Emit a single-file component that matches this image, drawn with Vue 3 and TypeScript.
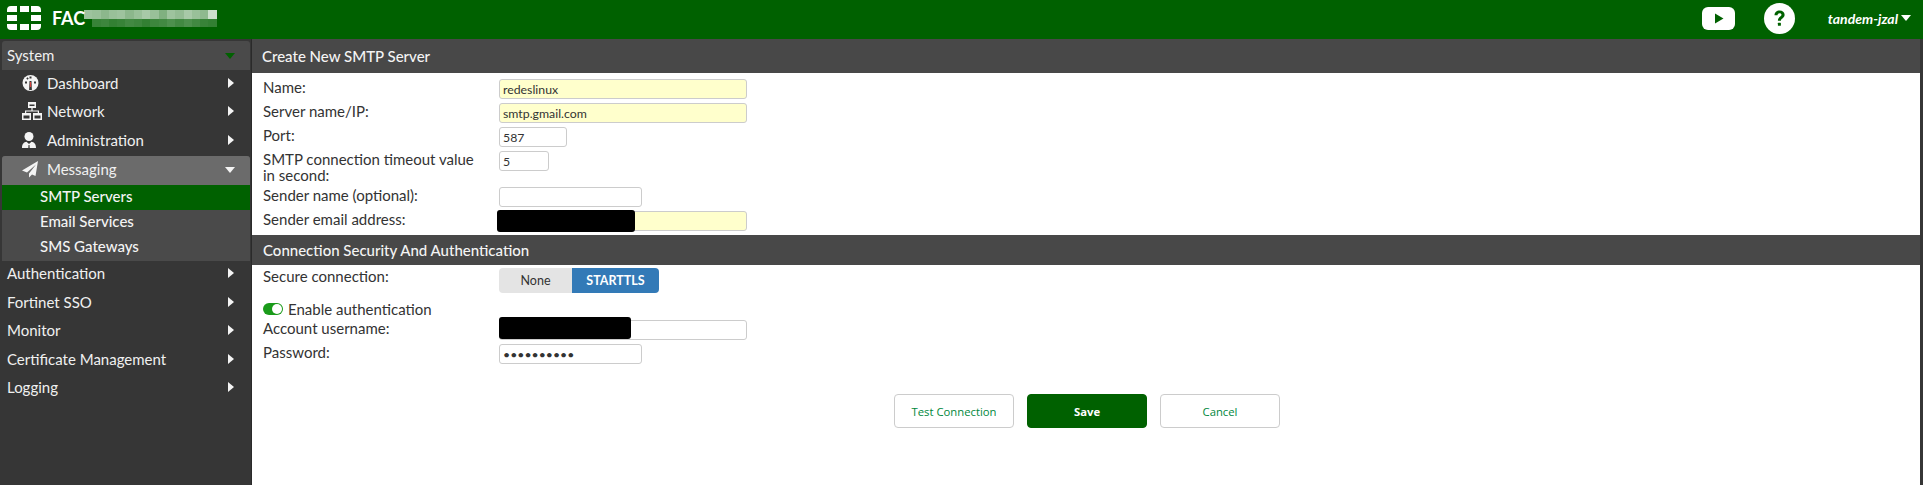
<script setup lang="ts">
const navTop = [
  { label: 'Dashboard', icon: 'gauge' },
  { label: 'Network', icon: 'net' },
  { label: 'Administration', icon: 'user' },
]
const subItems = ['SMTP Servers', 'Email Services', 'SMS Gateways']
const navBottom = ['Authentication', 'Fortinet SSO', 'Monitor', 'Certificate Management', 'Logging']

const mosaicTop = [0.62, 0.6, 0.55, 0.6, 0.62, 0.55, 0.6, 0.66, 0.6, 0.5, 0.62, 0.58, 0.66, 0.6, 0.56, 0.8]
const mosaicBottom = [0, 0.22, 0.24, 0.2, 0.22, 0.26, 0.24, 0.2, 0.24, 0.26, 0.3, 0.26, 0.3, 0.26, 0.22, 0.2]
</script>

<template>
  <div class="page">
    <header class="topbar">
      <div class="brand">
        <svg class="logo" width="34" height="24" viewBox="0 0 34 24" fill="#fff">
          <path d="M4 0H10v6H0V4A4 4 0 0 1 4 0zM13 0h9v6h-9zM24 0h6A4 4 0 0 1 34 4V6H24zM0 9h10v6H0zM24 9h10v6H24zM0 18h10v6H4A4 4 0 0 1 0 20zM13 18h9v6h-9zM24 18h10v2a4 4 0 0 1-4 4H24z" />
        </svg>
        <span class="brand-name">FAC</span>
        <div class="mosaic">
          <div class="mosaic-row">
            <i v-for="(a, n) in mosaicTop" :key="n" :style="{ opacity: a }"></i>
          </div>
          <div class="mosaic-row">
            <i v-for="(a, n) in mosaicBottom" :key="n" :style="{ opacity: a }"></i>
          </div>
        </div>
      </div>
      <div class="top-actions">
        <svg width="33" height="23" viewBox="0 0 33 23">
          <rect width="33" height="23" rx="6" fill="#fff" />
          <path d="M13 6.500v10l8.500-5z" fill="#006100" />
        </svg>
        <svg class="help" width="31" height="31" viewBox="0 0 31 31">
          <circle cx="15.500" cy="15.500" r="15.500" fill="#fff" />
          <path d="M10.500 12.300c0-3 2.200-4.800 5.100-4.800 2.900 0 5 1.800 5 4.300 0 3.600-3.700 3.500-3.700 6h-3c0-4 3.600-4 3.600-6 0-.9-.8-1.500-1.900-1.500-1.200 0-2 .8-2.100 2z" fill="#006100" />
          <rect x="13.900" y="19.700" width="3" height="3" rx=".5" fill="#006100" />
        </svg>
        <span class="user">tandem-jzal</span>
        <span class="user-caret"></span>
      </div>
    </header>

    <div class="body">
      <aside class="sidebar">
        <div class="group-head system">
          <span>System</span>
          <span class="caret-down green"></span>
        </div>

        <div v-for="item in navTop" :key="item.label" class="nav-item">
          <svg v-if="item.icon === 'gauge'" class="nav-icon" width="20" height="20" viewBox="1 0 20 20">
            <circle cx="9.500" cy="10" r="8" fill="#f4f4f4" />
            <path d="M8.500 3.500h2v2h-2zM4 8.500h2v2H4zM13 8.500h2v2h-2zM5.300 5.300l1.400-1 1 1.400-1.400 1z" fill="#363636" />
            <path d="M8.500 8h2l.4 9h-2.800z" fill="#363636" />
            <path d="M9 9h1l.2 5H8.800z" fill="#d43f3a" />
          </svg>
          <svg v-else-if="item.icon === 'net'" class="nav-icon" width="20" height="20" viewBox="0 0 20 20" fill="#f4f4f4">
            <path d="M6 1h8v6h-3.400v2.400H17V12h3v7h-9v-7h4.800v-1.400H4.200V12H9v7H0v-7h3V9.400h6.400V7H6zM7.500 3.500V5h5V3.500zM1.500 14.500V17.500h6v-3zM12.500 14.500V17.500h6v-3z" fill-rule="evenodd" />
          </svg>
          <svg v-else class="nav-icon" width="20" height="20" viewBox="2 0 20 20" fill="#f4f4f4">
            <circle cx="9" cy="6.500" r="4.500" />
            <path d="M2 18c0-4 2-6 4.500-6.200L9 14l2.500-2.200C14 12 16 14 16 18h-6.300l-.2-3h-1l-.2 3z" />
          </svg>
          <span class="nav-label">{{ item.label }}</span>
          <span class="caret-right"></span>
        </div>

        <div class="group">
          <div class="group-head messaging">
            <svg class="nav-icon" width="20" height="20" viewBox="1 0 20 20" fill="#f4f4f4">
              <path d="M17 2 1 11.500l5 2L15 5.500l-7 9v4l3-3 3.500 1.500z" />
            </svg>
            <span class="nav-label">Messaging</span>
            <span class="caret-down"></span>
          </div>
          <div
            v-for="(sub, n) in subItems"
            :key="sub"
            class="sub-item"
            :class="{ active: n === 0 }"
          >
            {{ sub }}
          </div>
        </div>

        <div v-for="label in navBottom" :key="label" class="nav-item plain">
          <span class="nav-label">{{ label }}</span>
          <span class="caret-right"></span>
        </div>
      </aside>

      <main class="content">
        <h2 class="section-title first">Create New SMTP Server</h2>
        <div class="form">
          <div class="row">
            <label>Name:</label>
            <input class="field wide required" value="redeslinux" />
          </div>
          <div class="row">
            <label>Server name/IP:</label>
            <input class="field wide required" value="smtp.gmail.com" />
          </div>
          <div class="row">
            <label>Port:</label>
            <input class="field port" value="587" />
          </div>
          <div class="row">
            <label>SMTP connection timeout value in second:</label>
            <input class="field timeout" value="5" />
          </div>
          <div class="row">
            <label>Sender name (optional):</label>
            <input class="field medium" value="" />
          </div>
          <div class="row">
            <label>Sender email address:</label>
            <div class="masked">
              <input class="field wide required" value="" />
              <span class="redact email"></span>
            </div>
          </div>
        </div>

        <h2 class="section-title">Connection Security And Authentication</h2>
        <div class="form auth">
          <div class="row secure">
            <label>Secure connection:</label>
            <div class="segmented">
              <span class="seg none">None</span>
              <span class="seg on">STARTTLS</span>
            </div>
          </div>
          <div class="switch-row">
            <span class="switch"></span>
            <span>Enable authentication</span>
          </div>
          <div class="row">
            <label>Account username:</label>
            <div class="masked">
              <input class="field wide" value="" />
              <span class="redact account"></span>
            </div>
          </div>
          <div class="row">
            <label>Password:</label>
            <input class="field medium" type="password" value="1234567890" />
          </div>
        </div>

        <div class="buttons">
          <button class="btn" type="button">Test Connection</button>
          <button class="btn primary" type="button">Save</button>
          <button class="btn" type="button">Cancel</button>
        </div>
      </main>
    </div>
  </div>
</template>

<style>
html,
body {
  margin: 0;
  background: #fff;
  overflow: hidden;
}
</style>

<style scoped>
.page {
  width: 1923px;
  height: 485px;
  display: flex;
  flex-direction: column;
  font-family: Lato, "Liberation Sans", sans-serif;
  font-size: 15px;
  color: #333;
}

.topbar {
  height: 39px;
  flex: none;
  background: #006100;
  display: flex;
  align-items: center;
  justify-content: space-between;
  box-sizing: border-box;
  padding: 0 12px 3px 7px;
}

.brand {
  display: flex;
  align-items: center;
}

.brand-name {
  margin-left: 11px;
  color: #fff;
  font-size: 18px;
  font-weight: 700;
  width: 32px;
}

.mosaic {
  width: 136px;
  margin-top: 1px;
}

.mosaic-row {
  display: flex;
  height: 8.500px;
}

.mosaic-row i {
  display: block;
  width: 8.300px;
  background: #fff;
}

.top-actions {
  display: flex;
  align-items: center;
}

.help {
  margin-left: 29px;
}

.user {
  margin-left: 33px;
  color: #fff;
  font-size: 14px;
  font-style: italic;
  font-weight: 700;
}

.user-caret {
  margin-left: 3px;
  border-left: 5px solid transparent;
  border-right: 5px solid transparent;
  border-top: 6px solid #fff;
}

.body {
  flex: 1;
  display: flex;
  min-height: 0;
}

.sidebar {
  width: 252px;
  flex: none;
  background: #363636;
  color: #f0f0f0;
  box-sizing: border-box;
  padding: 2px 0 0 2px;
  border-right: 1px solid #2a2a2a;
}

.group-head {
  display: flex;
  align-items: center;
  height: 29px;
  width: 248px;
  box-sizing: border-box;
  border-radius: 3px 3px 0 0;
}

.system {
  background: #4a4a4a;
  padding: 0 15px 2px 5px;
  justify-content: space-between;
}

.messaging {
  background: #6b6b6b;
  padding: 0 15px 2px 20px;
}

.nav-item {
  display: flex;
  align-items: center;
  box-sizing: border-box;
  height: 28.500px;
  padding: 0 0 3px 20px;
  width: 232px;
}

.nav-item.plain {
  padding-left: 5px;
}

.nav-icon {
  flex: none;
  margin-right: 5px;
}

.nav-label {
  flex: 1;
  white-space: nowrap;
}

.caret-right {
  border-top: 5px solid transparent;
  border-bottom: 5px solid transparent;
  border-left: 6px solid #f4f4f4;
  margin-left: auto;
}

.caret-down {
  border-left: 5px solid transparent;
  border-right: 5px solid transparent;
  border-top: 6px solid #f4f4f4;
  margin-top: 2px;
}

.caret-down.green {
  border-top-color: #006100;
}

.group {
  width: 248px;
  background: #4a4a4a;
  border-radius: 3px 3px 0 0;
  height: 105px;
}

.sub-item {
  height: 25px;
  line-height: 23px;
  padding-left: 38px;
  font-size: 15px;
  font-weight: 500;
  color: #f4f4f4;
}

.sub-item.active {
  background: #006100;
}

.content {
  flex: 1;
  min-width: 0;
  background: #fff;
  border-right: 3px solid #363636;
}

.section-title {
  margin: 0;
  height: 30px;
  line-height: 30px;
  padding-left: 11px;
  background: #484848;
  color: #f4f4f4;
  font-size: 15px;
  font-weight: 500;
}

.section-title.first {
  height: 34px;
  line-height: 35px;
  padding-left: 10px;
}

.form {
  padding: 6px 0 0 11px;
}

.form.auth {
  padding-top: 3px;
}

.row {
  display: flex;
  align-items: flex-start;
  margin-bottom: 4px;
}

.row label {
  width: 236px;
  flex: none;
  line-height: 16px;
  box-sizing: border-box;
  padding-right: 21px;
}

.field {
  display: block;
  height: 20px;
  box-sizing: border-box;
  border: 1px solid #ccc;
  border-radius: 3px;
  padding: 0 3px;
  font-family: Lato, "Liberation Sans", sans-serif;
  font-size: 12.300px;
  color: #333;
  background: #fff;
  outline: none;
}

.wide {
  width: 248px;
}

.required {
  background: #ffffcc;
}

.port {
  width: 68px;
}

.timeout {
  width: 50px;
}

.medium {
  width: 143px;
}

.masked {
  position: relative;
}

.redact {
  position: absolute;
  background: #000;
  border-radius: 3px;
}

.redact.email {
  left: -2px;
  top: -1px;
  width: 138px;
  height: 22px;
}

.redact.account {
  left: 0;
  top: -3px;
  width: 132px;
  height: 22px;
}

.row.secure {
  margin-bottom: 8px;
}

.segmented {
  display: flex;
  height: 25px;
  font-size: 12.500px;
  border-radius: 4px;
  overflow: hidden;
}

.seg {
  display: flex;
  align-items: center;
  justify-content: center;
}

.seg.none {
  width: 73px;
  background: #e4e4e4;
  color: #333;
}

.seg.on {
  width: 87px;
  background: #337ab7;
  color: #fff;
  font-weight: 700;
}

.switch-row {
  display: flex;
  align-items: center;
  height: 16px;
  margin-bottom: 3px;
  gap: 5px;
}

.switch {
  position: relative;
  width: 20px;
  height: 12px;
  border-radius: 6px;
  background: #1a9b1a;
}

.switch::after {
  content: "";
  position: absolute;
  right: 1px;
  top: 1px;
  width: 10px;
  height: 10px;
  border-radius: 50%;
  background: #fff;
}

.buttons {
  display: flex;
  justify-content: center;
  gap: 13px;
  margin-top: 30px;
  padding-left: 2px;
}

.btn {
  width: 120px;
  height: 34px;
  box-sizing: border-box;
  border: 1px solid #ccc;
  border-radius: 4px;
  background: #fff;
  color: #00873c;
  font-family: "Open Sans", sans-serif;
  font-size: 11.300px;
  padding: 0;
}

.btn.primary {
  background: #006100;
  border-color: #006100;
  color: #fff;
  font-weight: 700;
}
</style>
